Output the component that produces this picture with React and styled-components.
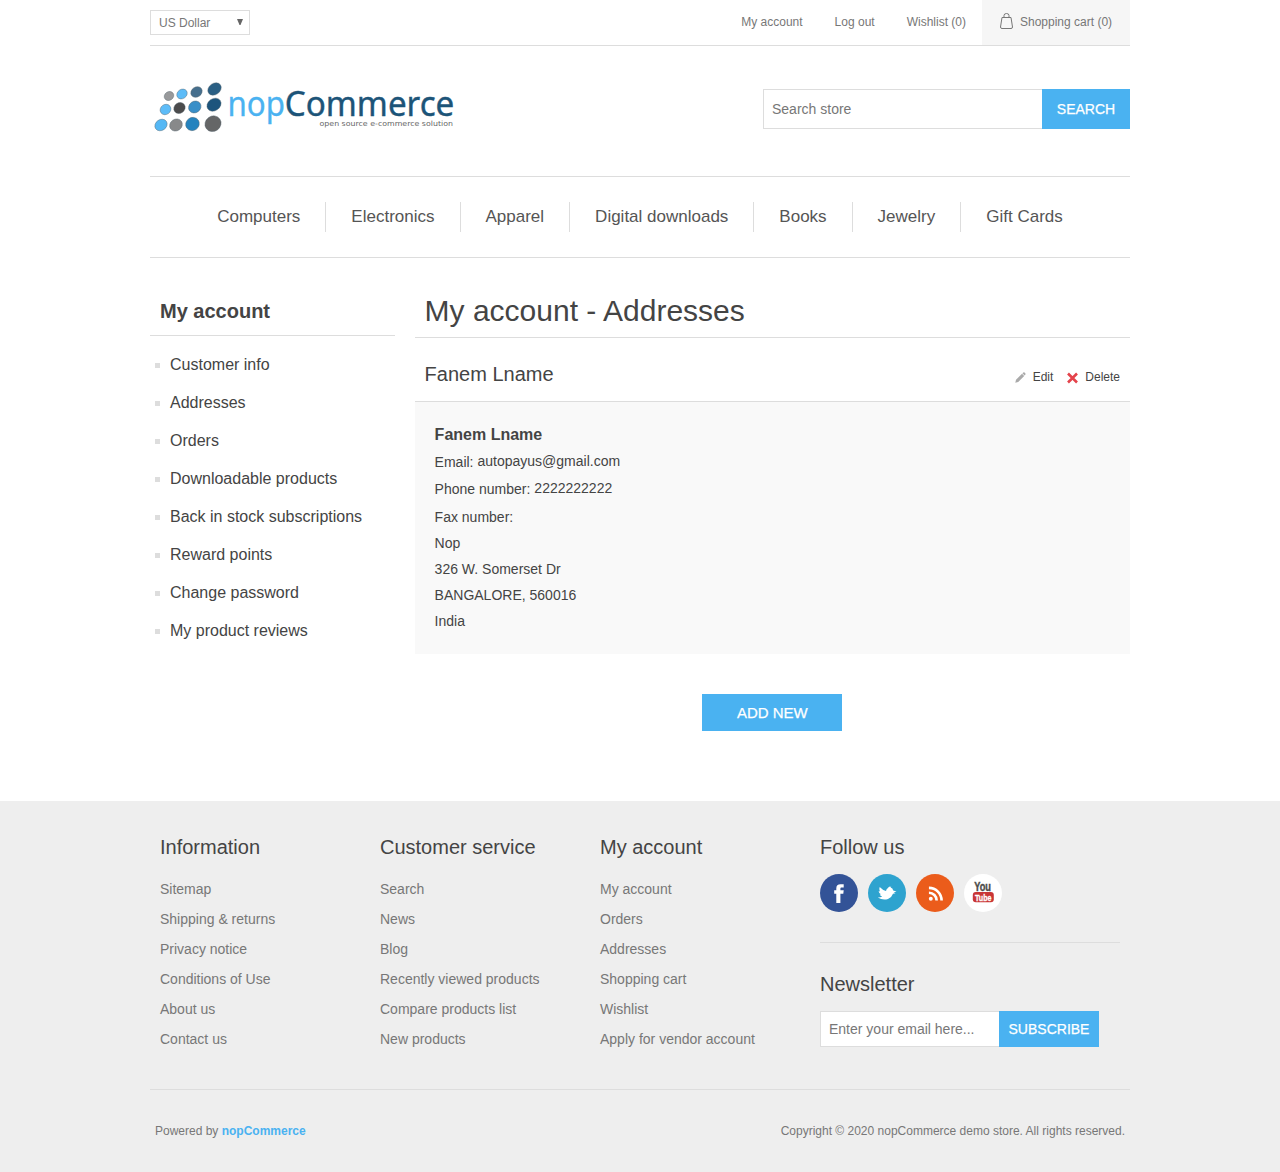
import React from "react";
import styled, { createGlobalStyle, css } from "styled-components";

const GlobalStyle = createGlobalStyle`
  * { box-sizing: border-box; margin: 0; padding: 0; }
  body { margin: 0; background: #fff; font: normal 14px "Liberation Sans", Arial, sans-serif; color: #777; }
  a { color: inherit; text-decoration: none; }
  ul { list-style: none; }
  input, button { font-family: inherit; border-radius: 0; outline: none; }
  input::placeholder { color: #777; opacity: 1; }
`;

const Wrapper = styled.div`
  width: 980px;
  margin: 0 auto;
`;

const TopBar = styled.div`
  display: flex;
  justify-content: space-between;
  height: 46px;
  border-bottom: 1px solid #ddd;
  font-size: 12px;
`;

const CurrencyBox = styled.button`
  display: flex;
  align-items: center;
  justify-content: space-between;
  width: 100px;
  height: 25px;
  margin-top: 10px;
  padding: 0 6px 0 8px;
  border: 1px solid #ddd;
  background: #fff;
  color: #777;
  font-size: 12px;
`;

const Arrow = styled.svg`
  width: 6px;
  height: 6px;
  margin-top: -2px;
`;

const TopLinks = styled.ul`
  display: flex;
`;

const TopLink = styled.li`
  padding: 0 16px;
  height: 45px;
  line-height: 44px;
`;

const CartLink = styled.li`
  display: flex;
  gap: 7px;
  width: 148px;
  height: 45px;
  padding-left: 18px;
  background: #f6f6f6;
  line-height: 44px;

  svg { margin-top: 13px; }
`;

const Header = styled.header`
  display: flex;
  justify-content: space-between;
  height: 130px;
  padding-top: 30px;
`;

const LogoSvg = styled.svg`
  width: 310px;
  height: 70px;
`;

const Field = styled.form`
  display: flex;
  height: ${(p) => p.$height}px;
  margin-top: ${(p) => p.$top}px;
`;

const TextInput = styled.input`
  width: ${(p) => p.$width}px;
  height: 100%;
  padding: 0 8px;
  border: 1px solid #ddd;
  border-right: 0;
  background: #fff;
  color: #777;
  font-size: 14px;
`;

const Button = styled.button`
  display: block;
  width: ${(p) => p.$width}px;
  height: ${(p) => p.$height}px;
  border: 0;
  background: #4ab2f1;
  color: #fff;
  text-align: center;
  font-size: ${(p) => p.$size || 14}px;
  -webkit-text-stroke: 0.25px #fff;
`;

const Menu = styled.nav`
  height: 82px;
  border: 1px solid #ddd;
  border-width: 1px 0;
`;

const MenuList = styled.ul`
  display: flex;
  justify-content: center;
  padding-top: 25px;
`;

const MenuItem = styled.li`
  height: 30px;
  padding: 0 25px;
  border-left: 1px solid #ddd;
  line-height: 29px;
  color: #555;
  font-size: 17px;

  &:first-child { border-left: 0; }
`;

const Content = styled.div`
  display: flex;
  justify-content: space-between;
  height: 543px;
  padding-top: 30px;
`;

const Side = styled.aside`
  width: 245px;
`;

const SideTitle = styled.h2`
  height: 48px;
  padding-left: 10px;
  border-bottom: 1px solid #ddd;
  line-height: 46px;
  color: #444;
  font-size: 20px;
`;

const SideList = styled.ul`
  padding: 10px 5px;
`;

const SideItem = styled.li`
  display: flex;
  align-items: center;
  gap: 10px;
  height: 38px;
  color: #444;
  font-size: 16px;

  &::before {
    content: "";
    width: 5px;
    height: 5px;
    margin-top: 1px;
    background: #ddd;
  }
`;

const Main = styled.main`
  width: 715.4px;
`;

const PageTitle = styled.h1`
  height: 50px;
  padding-left: 10px;
  border-bottom: 1px solid #ddd;
  line-height: 45px;
  color: #444;
  font-size: 30px;
  font-weight: normal;
`;

const AddressHead = styled.div`
  display: flex;
  justify-content: space-between;
  height: 64px;
  padding: 0 10px;
  border-bottom: 1px solid #ddd;
  color: #444;
`;

const AddressName = styled.strong`
  font-size: 20px;
  font-weight: normal;
  line-height: 72px;
`;

const Actions = styled.div`
  display: flex;
  gap: 13px;
  padding-top: 32px;
  font-size: 12px;
  line-height: 14px;
`;

const Action = styled.a`
  display: flex;
  gap: 7px;

  svg { margin-top: 2px; }
`;

const AddressInfo = styled.ul`
  height: 252px;
  padding: 20px;
  background: #f9f9f9;
  color: #444;
`;

const InfoLine = styled.li`
  display: flex;
  gap: 4px;
  height: ${(p) => p.$height || 26}px;
  line-height: 26px;
  ${(p) =>
    p.$bold &&
    css`
      font-size: 16px;
      font-weight: bold;
    `}
`;

const InfoValue = styled.span`
  line-height: 24px;
`;

const AddRow = styled.div`
  display: flex;
  justify-content: center;
  padding-top: 40px;
`;

const Footer = styled.footer`
  height: 371px;
  background: #eee;
`;

const FooterTop = styled.div`
  display: flex;
  height: 289px;
  padding: 30px 10px 0;
  border-bottom: 1px solid #ddd;
`;

const FooterColumn = styled.section`
  width: ${(p) => p.$width || 220}px;
`;

const FooterTitle = styled.h3`
  height: 43px;
  line-height: 32px;
  color: #444;
  font-size: 20px;
  font-weight: normal;
`;

const FooterLink = styled.li`
  line-height: 30px;
`;

const Socials = styled.div`
  display: flex;
  gap: 10px;
  height: 69px;
  border-bottom: 1px solid #ddd;
`;

const Social = styled.a`
  display: flex;
  align-items: center;
  justify-content: center;
  width: 38px;
  height: 38px;
  border-radius: 50%;
  background: ${(p) => p.$bg};
  color: #fff;

  svg { overflow: visible; }
`;

const Newsletter = styled.div`
  padding-top: 25px;
`;

const FooterBottom = styled.div`
  display: flex;
  justify-content: space-between;
  padding: 0 5px;
  font-size: 12px;
  line-height: 82px;

  a { color: #4ab2f1; font-weight: bold; }
`;

const DOTS = [
  [19, 20, "#98999b", 5, 4.3], [32, 18, "#5dbcf8", 5.5, 4.6], [46.5, 16, "#466f8d", 6, 5], [64.5, 13, "#2a5f84", 7.2, 5.6],
  [15.5, 33.5, "#5dbcf8", 5.6, 5], [29.5, 32, "#4b4b4c", 5.9, 5.2], [44.8, 31, "#398fc8", 6.5, 5.7], [64, 28.7, "#1d557d", 7.5, 6],
  [11, 49, "#55b8f5", 6.5, 5.4], [26, 49, "#88898a", 6.6, 5.8], [42.5, 48, "#2583be", 7, 6.5], [63, 47.7, "#656667", 8.3, 7.6],
];

function Logo() {
  return (
    <LogoSvg viewBox="0 0 310 70" fontFamily='"Noto Sans", "Open Sans", sans-serif'>
      {DOTS.map(([x, y, fill, rx, ry]) => (
        <ellipse key={`${x}-${y}`} cx={x} cy={y} rx={rx} ry={ry} fill={fill} stroke="#53616b" strokeWidth="0.4" transform={`rotate(-35 ${x} ${y})`} />
      ))}
      <text x="77.500" y="40" fontSize="34.500" fill="#4ab2f1" stroke="#4ab2f1" strokeWidth=".3" textLength="57.500" lengthAdjust="spacingAndGlyphs">nop</text>
      <text x="134.800" y="40" fontSize="34.500" fill="#1c5478" stroke="#1c5478" strokeWidth=".4" textLength="169.500" lengthAdjust="spacingAndGlyphs">Commerce</text>
      <text x="169.500" y="50" fontFamily='"DejaVu Sans", sans-serif' fontSize="7.200" fill="#666" textLength="133.500" lengthAdjust="spacingAndGlyphs">open source e-commerce solution</text>
    </LogoSvg>
  );
}

function Bag() {
  return (
    <svg width="13" height="16" viewBox="0 0 13 16" fill="none" stroke="#777">
      <path d="M2 4.500H11L12.500 14Q12.500 15.500 11 15.500H2Q.5 15.500 .5 14Z" />
      <path d="M4 4.500V2.500Q4 .5 6.500 .5T9 2.500V4.500" />
    </svg>
  );
}

function Pencil() {
  return (
    <svg width="11" height="11" viewBox="0 0 11 11" fill="#aaa">
      <path d="M.3 10.700 1 7.700 7 1.700 9.200 3.900 3.200 9.900Z M7.400 1.300 8.400.4Q9 0 9.600.6L10.400 1.400Q10.900 2 10.400 2.600L9.600 3.500Z" />
    </svg>
  );
}

function Cross() {
  return (
    <svg width="12" height="12" viewBox="0 0 12 12" stroke="#e4434b" strokeWidth="2.6">
      <path d="M2 1.500 11 10.500M11 1.500 2 10.500" />
    </svg>
  );
}

function Facebook() {
  return (
    <svg width="10" height="19" viewBox="0 0 10 19" fill="#fff">
      <path d="M2.300 19V9.700H.2V6.300H2.300V4.500C2.300 1.500 3.800.2 6.500.2H9.700V3.500H7.800C6.700 3.500 6.400 3.900 6.400 4.800V6.300H9.700L9.300 9.700H6.400V19Z" />
    </svg>
  );
}

function Bird() {
  return (
    <svg width="20" height="14" viewBox="0 0 20 14" fill="#fff">
      <path d="M.8 11.400Q3.500 11.500 5.200 10.500Q3.200 10 2.700 8.400L4 8.300Q1.800 7.400 1.600 5.100L2.900 5.500Q1.700 3.300 2.700 1Q5.500 4.100 9 4.900Q9.400 3 10.700 2.200Q11.300 1 13 .2L12.700 1.100L14.300 .6L13.600 1.600Q15.800 2.200 16.200 4.400L19.500 5.500L16.700 6.500L18.600 7.200L16 7.700Q14.600 11.600 11 13Q5.500 14.600.8 11.400Z" />
    </svg>
  );
}

function Rss() {
  return (
    <svg width="15" height="15" viewBox="0 0 16 16" fill="none" stroke="#fff" strokeWidth="2.8">
      <circle cx="3" cy="13.500" r="2.100" fill="#fff" stroke="none" />
      <path d="M1 7.200A8.200 8.200 0 0 1 9.200 15.500M1 2A13.500 13.500 0 0 1 14.500 15.500" />
    </svg>
  );
}

function YouTube() {
  return (
    <svg width="22" height="22" viewBox="0 0 22 22" fontFamily='"Liberation Sans", sans-serif' fontWeight="bold">
      <text x="2.200" y="9" fontSize="12" fill="#4b4b4b" stroke="#4b4b4b" strokeWidth=".4" textLength="16.800" lengthAdjust="spacingAndGlyphs">You</text>
      <rect x=".8" y="10" width="21" height="10.200" rx="3" fill="#c93535" />
      <text x="3" y="18.500" fontSize="9.500" fill="#fff" stroke="#fff" strokeWidth=".3" textLength="16.500" lengthAdjust="spacingAndGlyphs">Tube</text>
    </svg>
  );
}

const MENU = ["Computers", "Electronics", "Apparel", "Digital downloads", "Books", "Jewelry", "Gift Cards"];
const SIDE = ["Customer info", "Addresses", "Orders", "Downloadable products", "Back in stock subscriptions", "Reward points", "Change password", "My product reviews"];
const COLUMNS = [
  ["Information", ["Sitemap", "Shipping & returns", "Privacy notice", "Conditions of Use", "About us", "Contact us"]],
  ["Customer service", ["Search", "News", "Blog", "Recently viewed products", "Compare products list", "New products"]],
  ["My account", ["My account", "Orders", "Addresses", "Shopping cart", "Wishlist", "Apply for vendor account"]],
];

export default function App() {
  return (
    <>
      <GlobalStyle />
      <Wrapper>
        <TopBar>
          <CurrencyBox>
            US Dollar
            <Arrow viewBox="0 0 6 6"><path d="M0 0H6L3.500 6H2.500Z" fill="#666" /></Arrow>
          </CurrencyBox>
          <TopLinks>
            <TopLink><a href="#">My account</a></TopLink>
            <TopLink><a href="#">Log out</a></TopLink>
            <TopLink><a href="#">Wishlist (0)</a></TopLink>
            <CartLink><Bag /><a href="#">Shopping cart (0)</a></CartLink>
          </TopLinks>
        </TopBar>
        <Header>
          <Logo />
          <Field $height={40} $top={13}>
            <TextInput $width={279} placeholder="Search store" />
            <Button type="button" $width={88} $height={40}>SEARCH</Button>
          </Field>
        </Header>
        <Menu>
          <MenuList>
            {MENU.map((m) => <MenuItem key={m}><a href="#">{m}</a></MenuItem>)}
          </MenuList>
        </Menu>
        <Content>
          <Side>
            <SideTitle>My account</SideTitle>
            <SideList>
              {SIDE.map((s) => <SideItem key={s}><a href="#">{s}</a></SideItem>)}
            </SideList>
          </Side>
          <Main>
            <PageTitle>My account - Addresses</PageTitle>
            <AddressHead>
              <AddressName>Fanem Lname</AddressName>
              <Actions>
                <Action href="#"><Pencil />Edit</Action>
                <Action href="#"><Cross />Delete</Action>
              </Actions>
            </AddressHead>
            <AddressInfo>
              <InfoLine $bold $height={27}>Fanem Lname</InfoLine>
              <InfoLine $height={27}>Email: <InfoValue>autopayus@gmail.com</InfoValue></InfoLine>
              <InfoLine $height={28}>Phone number: <InfoValue>2222222222</InfoValue></InfoLine>
              <InfoLine>Fax number:</InfoLine>
              <InfoLine>Nop</InfoLine>
              <InfoLine>326 W. Somerset Dr</InfoLine>
              <InfoLine>BANGALORE, 560016</InfoLine>
              <InfoLine>India</InfoLine>
            </AddressInfo>
            <AddRow>
              <Button $width={140} $height={37} $size={15}>ADD NEW</Button>
            </AddRow>
          </Main>
        </Content>
      </Wrapper>
      <Footer>
        <Wrapper>
          <FooterTop>
            {COLUMNS.map(([title, links]) => (
              <FooterColumn key={title}>
                <FooterTitle>{title}</FooterTitle>
                <ul>{links.map((l) => <FooterLink key={l}><a href="#">{l}</a></FooterLink>)}</ul>
              </FooterColumn>
            ))}
            <FooterColumn $width={300}>
              <FooterTitle>Follow us</FooterTitle>
              <Socials>
                <Social href="#" $bg="#335397"><Facebook /></Social>
                <Social href="#" $bg="#2ea3cf"><Bird /></Social>
                <Social href="#" $bg="#eb5c1b"><Rss /></Social>
                <Social href="#" $bg="#fff"><YouTube /></Social>
              </Socials>
              <Newsletter>
                <FooterTitle>Newsletter</FooterTitle>
                <Field $height={36} $top={0}>
                  <TextInput $width={179} placeholder="Enter your email here..." />
                  <Button type="button" $width={100} $height={36}>SUBSCRIBE</Button>
                </Field>
              </Newsletter>
            </FooterColumn>
          </FooterTop>
          <FooterBottom>
            <span>Powered by <a href="#">nopCommerce</a></span>
            <span>Copyright © 2020 nopCommerce demo store. All rights reserved.</span>
          </FooterBottom>
        </Wrapper>
      </Footer>
    </>
  );
}
